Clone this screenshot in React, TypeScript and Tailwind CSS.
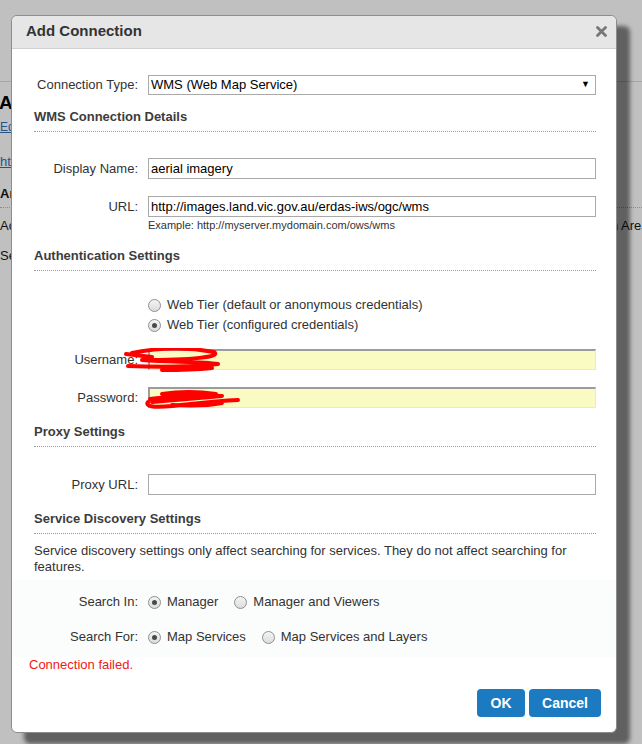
import React from 'react';

const font = "font-['Liberation_Sans',Arial,sans-serif]";

const Radio: React.FC<{ checked?: boolean }> = ({ checked }) => (
  <span className="inline-flex w-[13px] h-[13px] shrink-0 rounded-full border border-[#8f8f8f] bg-gradient-to-b from-[#f4f4f4] to-[#dcdcdc] items-center justify-center">
    {checked && <span className="w-[5px] h-[5px] rounded-full bg-[#4a4a4a]" />}
  </span>
);

const Heading: React.FC<{ children: React.ReactNode; className?: string }> = ({ children, className }) => (
  <div className={`h-[23px] leading-[16px] pb-[6px] border-b border-dotted border-[#9a9a9a] font-bold text-[13px] text-[#3c3c3c] ${className ?? ''}`}>
    {children}
  </div>
);

const Field: React.FC<{ label: string; children: React.ReactNode; className?: string }> = ({ label, children, className }) => (
  <div className={`flex items-center ${className ?? ''}`}>
    <label className="w-[104px] shrink-0 text-right text-[13px] text-[#333]">{label}</label>
    <div className="ml-[10px] flex-1 relative">{children}</div>
  </div>
);

const TextBox: React.FC<{ value?: string }> = ({ value }) => (
  <div className="h-[21px] border border-[#a9a9a9] bg-white px-[2px] text-[13px] leading-[19px] text-black">{value}</div>
);

// autofilled credential box, scribbled out in red
const Secret: React.FC<{ path: string; left: number }> = ({ path, left }) => (
  <div className="h-[21px] border-t-2 border-l-2 border-[#9c9c9c] border-r border-b border-r-[#e6e6e6] border-b-[#e6e6e6] bg-[#fafac3] relative">
    <svg className="absolute top-[-3px]" style={{ left }} width="130" height="26" viewBox="0 0 130 26">
      <path d={path} fill="none" stroke="#ff0000" strokeWidth="4" strokeLinecap="round" strokeLinejoin="round" />
    </svg>
  </div>
);

const RadioOption: React.FC<{ checked?: boolean; label: string; className?: string }> = ({ checked, label, className }) => (
  <span className={`inline-flex items-center gap-[6px] text-[13px] text-[#333] ${className ?? ''}`}>
    <Radio checked={checked} />
    {label}
  </span>
);

export default function App() {
  return (
    <div className={`relative w-[642px] h-[744px] overflow-hidden bg-[#c0c0c0] ${font}`}>
      {/* page behind the modal, only its edges show */}
      <div className="flex flex-col text-[13px] text-[#111]">
        <div className="h-[82px] border-b border-[#a6a6a6]" />
        <div className="flex justify-between">
          <div className="w-[11px] overflow-hidden whitespace-nowrap flex flex-col">
            <div className="h-[22px] mt-[10px] -ml-[1px] font-bold text-[19px] leading-[22px] text-black">Ar</div>
            <div className="h-[16px] mt-[5px] text-[12px] leading-[16px] text-[#24548a] underline">Ed</div>
            <div className="h-[16px] mt-[19px] leading-[16px] text-[#24548a] underline">htt</div>
            <div className="w-[30px] mt-[16px] pb-[5px] border-b border-dotted border-[#8a8a8a] font-bold leading-[16px]">Ar</div>
            <div className="mt-[10px] leading-[16px]">Ac</div>
            <div className="mt-[14px] leading-[16px]">Se</div>
          </div>
          <div className="w-[25px] overflow-hidden whitespace-nowrap flex flex-col">
            <div className="mt-[125px] border-b border-dotted border-[#8a8a8a]" />
            <div className="mt-[10px] -ml-[6px] leading-[16px]">h Area</div>
          </div>
        </div>
      </div>

      {/* modal */}
      <div className="absolute left-[11px] top-[15px] w-[606px] h-[718px] flex flex-col bg-white border border-[#8c8c8c] rounded-[6px] shadow-[13px_11px_4px_rgba(0,0,0,0.5)]">
        <div className="h-[33px] shrink-0 flex items-center justify-between pl-[14px] pr-[9px] pb-[1px] bg-[#e6e6e6] border-b border-[#d0d0d0] rounded-t-[6px]">
          <span className="font-bold text-[15px] text-[#333]">Add Connection</span>
          <svg width="11" height="11" viewBox="0 0 11 11">
            <path d="M1.5 1.5 L9.5 9.5 M9.5 1.5 L1.5 9.5" stroke="#777" strokeWidth="2.8" strokeLinecap="round" />
          </svg>
        </div>

        <div className="flex flex-col pl-[22px] pr-[20px] pt-[26px]">
          <Field label="Connection Type:">
            <div className="h-[20px] border border-[#a9a9a9] bg-white pl-[2px] pr-[5px] flex items-center justify-between text-[13px] text-black">
              <span>WMS (Web Map Service)</span>
              <span className="text-[9px]">▼</span>
            </div>
          </Field>

          <Heading className="mt-[14px]">WMS Connection Details</Heading>
          <Field label="Display Name:" className="mt-[26px]">
            <TextBox value="aerial imagery" />
          </Field>
          <Field label="URL:" className="mt-[17px]">
            <TextBox value="http://images.land.vic.gov.au/erdas-iws/ogc/wms" />
          </Field>
          <div className="ml-[114px] mt-[1px] text-[11px] leading-[14px] text-[#333]">
            Example: http://myserver.mydomain.com/ows/wms
          </div>

          <Heading className="mt-[16px]">Authentication Settings</Heading>
          <div className="ml-[114px] mt-[24px] flex flex-col">
            <RadioOption label="Web Tier (default or anonymous credentials)" className="h-[20px]" />
            <RadioOption checked label="Web Tier (configured credentials)" className="h-[20px]" />
          </div>
          <Field label="Username:" className="mt-[14px]">
            <Secret left={-28} path="M4 6 L30 9 M10 5 C40 -1 70 0 92 4 C100 9 70 12 20 12 C50 14 80 14 96 16 C60 20 30 19 6 18 M40 22 C60 22 80 21 90 20" />
          </Field>
          <Field label="Password:" className="mt-[17px]">
            <Secret left={-8} path="M6 16 C3 20 10 22 30 20 C50 18 70 15 96 14 M8 13 C30 10 60 9 80 10 C60 12 30 14 10 16 M20 8 C40 5 60 6 74 8 M30 19 C50 20 70 19 80 17" />
          </Field>

          <Heading className="mt-[16px]">Proxy Settings</Heading>
          <Field label="Proxy URL:" className="mt-[27px]">
            <TextBox />
          </Field>

          <Heading className="mt-[16px]">Service Discovery Settings</Heading>
          <p className="mt-[9px] text-[13px] leading-[16px] text-[#333]">
            Service discovery settings only affect searching for services. They do not affect searching for features.
          </p>
        </div>

        <div className="mt-[5px] pt-[12px] pb-[10px] pl-[22px] pr-[20px] bg-[#fbfcfc] flex flex-col gap-[15px]">
          <Field label="Search In:" className="h-[20px]">
            <div className="flex items-center">
              <RadioOption checked label="Manager" />
              <RadioOption label="Manager and Viewers" className="ml-[16px]" />
            </div>
          </Field>
          <Field label="Search For:" className="h-[20px]">
            <div className="flex items-center">
              <RadioOption checked label="Map Services" />
              <RadioOption label="Map Services and Layers" className="ml-[16px]" />
            </div>
          </Field>
        </div>

        <div className="pl-[17px] text-[13px] leading-[16px] text-[#f01818]">Connection failed.</div>

        <div className="mt-[16px] pr-[15px] flex justify-end gap-[4px]">
          <button className="w-[48px] h-[28px] rounded-[4px] bg-[#1c7bc0] text-white font-bold text-[14px]">OK</button>
          <button className="w-[72px] h-[28px] rounded-[4px] bg-[#1c7bc0] text-white font-bold text-[14px]">Cancel</button>
        </div>
      </div>
    </div>
  );
}
